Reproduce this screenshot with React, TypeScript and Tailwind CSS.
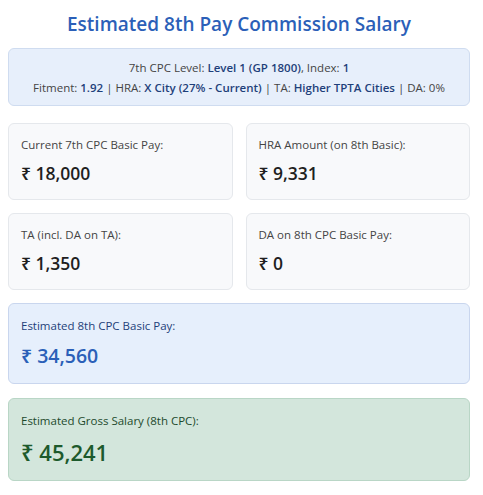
import React from "react";

function Card({ label, value }: { label: string; value: string }) {
  return (
    <div className="h-[77px] rounded-md border border-[#e5e8ec] bg-[#f8f9fb] px-3 pt-[13px]">
      <div className="text-[11.5px] leading-[16px] text-[#444]">{label}</div>
      <div className="mt-[8px] text-[17.5px] leading-[24px] font-semibold text-[#1f1f1f]">{value}</div>
    </div>
  );
}

export default function App() {
  return (
    <div className="bg-white pl-2 pr-[13px] pt-[10px] pb-3" style={{ fontFamily: '"Open Sans", "Noto Sans", sans-serif' }}>
      <h1 className="text-center text-[19px] leading-[28px] font-semibold text-[#2b5fb8]">
        Estimated 8th Pay Commission Salary
      </h1>
      <div className="mt-[10px] rounded-md border border-[#cfdcf0] bg-[#e7effb] px-3 pt-[9px] pb-[7px] text-center text-[11.5px] leading-[20px] text-[#444]">
        <div>
          7th CPC Level: <span className="font-semibold text-[#1e3f7a]">Level 1 (GP 1800)</span>, Index:{" "}
          <span className="font-semibold text-[#1e3f7a]">1</span>
        </div>
        <div>
          Fitment: <span className="font-semibold text-[#1e3f7a]">1.92</span> | HRA:{" "}
          <span className="font-semibold text-[#1e3f7a]">X City (27% - Current)</span> | TA:{" "}
          <span className="font-semibold text-[#1e3f7a]">Higher TPTA Cities</span> | DA: 0%
        </div>
      </div>
      <div className="mt-[17px] grid grid-cols-2 gap-x-[13px] gap-y-[13px]">
        <Card label="Current 7th CPC Basic Pay:" value="₹ 18,000" />
        <Card label="HRA Amount (on 8th Basic):" value="₹ 9,331" />
        <Card label="TA (incl. DA on TA):" value="₹ 1,350" />
        <Card label="DA on 8th CPC Basic Pay:" value="₹ 0" />
      </div>
      <div className="mt-[13px] h-[81px] rounded-md border border-[#c9d6ee] bg-[#e6effc] px-3 pt-[14px]">
        <div className="text-[11.5px] leading-[16px] text-[#1e3f7a]">Estimated 8th CPC Basic Pay:</div>
        <div className="mt-[8px] text-[19.5px] leading-[28px] font-semibold text-[#2b5fb8]">₹ 34,560</div>
      </div>
      <div className="mt-[14px] h-[83px] rounded-md border border-[#b9d6c6] bg-[#d3e6dc] px-3 pt-[14px]">
        <div className="text-[11.5px] leading-[16px] text-[#1d4a2c]">Estimated Gross Salary (8th CPC):</div>
        <div className="mt-[8px] text-[22px] leading-[30px] font-semibold text-[#1d5a2c]">₹ 45,241</div>
      </div>
    </div>
  );
}
